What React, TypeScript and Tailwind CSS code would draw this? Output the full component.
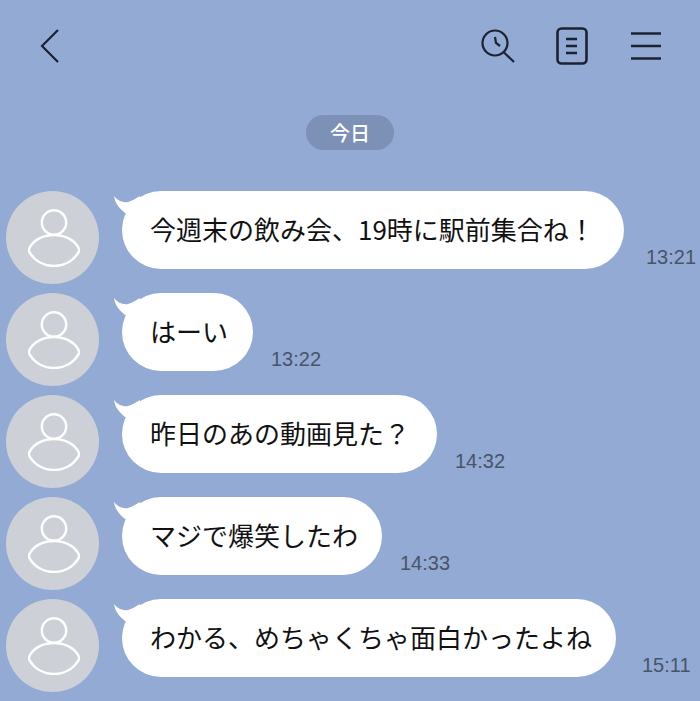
const messages = [
  { text: '今週末の飲み会、19時に駅前集合ね！', time: '13:21', width: 'w-[502px]', gap: 'ml-[22px]' },
  { text: 'はーい', time: '13:22', width: 'w-[131px]', gap: 'ml-[18px]' },
  { text: '昨日のあの動画見た？', time: '14:32', width: 'w-[315px]', gap: 'ml-[18px]' },
  { text: 'マジで爆笑したわ', time: '14:33', width: 'w-[260px]', gap: 'ml-[18px]' },
  { text: 'わかる、めちゃくちゃ面白かったよね', time: '15:11', width: 'w-[494px]', gap: 'ml-[26px]' },
];

function Avatar() {
  return (
    <div className="w-[93px] h-[93px] rounded-full bg-[#cdd0d6] flex items-center justify-center shrink-0">
      <svg className="ml-[2px]" width="52" height="58" viewBox="0 0 52 58" fill="none" stroke="#fff" strokeWidth="2.5">
        <circle cx="26" cy="13.5" r="12.2" />
        <path d="M2 38 C6 31 15 26 26 26 C37 26 46 31 50 38 C51.5 40.5 51.5 42.5 50 44 C45 52 36 57 26 57 C16 57 7 52 2 44 C0.5 42.5 0.5 40.5 2 38 Z" />
      </svg>
    </div>
  );
}

function Message({ text, time, width, gap }: { text: string; time: string; width: string; gap: string }) {
  return (
    <div className="flex items-start pl-[6px]">
      <Avatar />
      <div className={`relative ml-[23px] h-[78px] ${width} shrink-0 rounded-[39px] bg-white flex items-center pl-[28px] pb-[2px] text-[26px] leading-none text-[#111] whitespace-nowrap`}>
        {/* speech bubble tail */}
        <svg className="absolute left-[-9px] top-[4px]" width="28" height="26" viewBox="0 0 28 26" fill="#fff">
          <path d="M1 1 C5 6 10 8 15 7 C19 6 22 4 27 1 L27 24 L12 18 C6 13 2 8 1 1 Z" />
        </svg>
        {text}
      </div>
      <span
        className={`${gap} mt-[54px] text-[20px] leading-[24px] text-[#4a5468] whitespace-nowrap`}
        style={{ fontFamily: '"Liberation Sans", sans-serif' }}
      >
        {time}
      </span>
    </div>
  );
}

export default function App() {
  return (
    <div
      className="w-[700px] h-[701px] overflow-hidden bg-[#92aad4]"
      style={{ fontFamily: '"Noto Sans CJK JP", "Noto Sans", sans-serif' }}
    >
      <header className="h-[92px] flex items-center pl-[40px] pr-[39px] text-[#1c2230]">
        <svg width="20" height="34" viewBox="0 0 20 34" fill="none" stroke="currentColor" strokeWidth="2.2">
          <path d="M18 1 L2 17 L18 33" />
        </svg>
        <div className="ml-auto flex items-center">
          <svg width="34" height="34" viewBox="0 0 34 34" fill="none" stroke="currentColor" strokeWidth="2.2">
            <circle cx="14" cy="14" r="12.5" />
            <path d="M14 8 L15 14 L19 17" />
            <path d="M22.5 23 L33 33" />
          </svg>
          <svg className="ml-[41px]" width="32" height="38" viewBox="0 0 32 38" fill="none" stroke="currentColor" strokeWidth="2.6">
            <rect x="1.5" y="1.5" width="29" height="35" rx="4" />
            <path d="M10 12 H21 M10 19 H21 M10 26 H21" />
          </svg>
          <svg className="ml-[43px]" width="30" height="30" viewBox="0 0 30 30" fill="none" stroke="currentColor" strokeWidth="2.4">
            <path d="M0 2.5 H30 M0 15 H30 M0 27.5 H30" />
          </svg>
        </div>
      </header>
      <div className="flex justify-center mt-[23px]">
        <span className="w-[88px] h-[35px] rounded-full bg-[#7d91b6] flex items-center justify-center text-[20px] font-medium leading-none text-white">
          今日
        </span>
      </div>
      <div className="mt-[41px] flex flex-col gap-[9px]">
        {messages.map((m) => (
          <Message key={m.time} {...m} />
        ))}
      </div>
    </div>
  );
}
